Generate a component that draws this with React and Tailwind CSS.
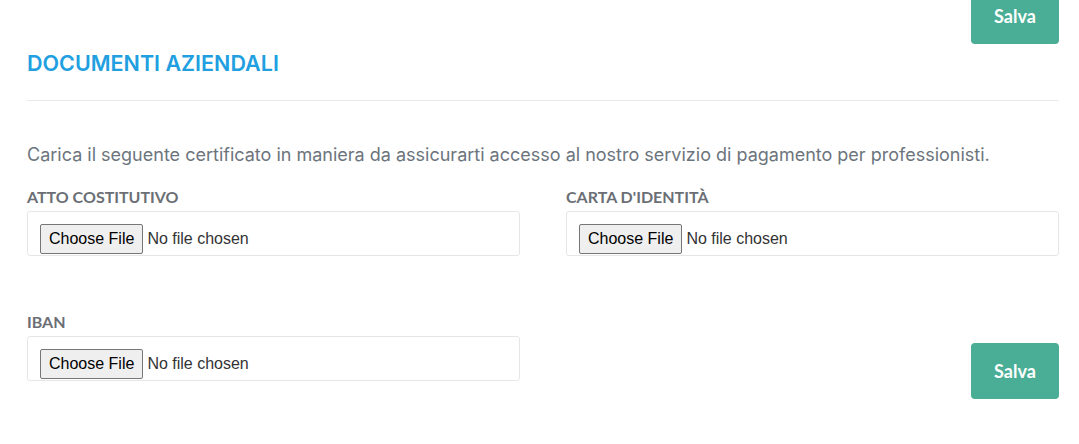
import React from "react";

/* ================= FILE FIELD ================= */
function FileField({ label }) {
  return (
    <div>
      <label className="block font-['Lato'] font-bold text-[16px] leading-[20px] text-[#6b6f75] uppercase mb-[4px]">
        {label}
      </label>
      <div className="h-[45px] border border-[#e6e6e6] rounded-[3px] px-[12px] pt-[12px]">
        <input
          type="file"
          className="block text-[16px] font-['Liberation_Sans',Arial,sans-serif] text-[#333] file:mr-[4px] file:px-[8px] file:py-[2px] file:border file:border-solid file:border-[#767676] file:rounded-[2px] file:bg-[#efefef] file:text-black file:text-[16px] file:font-['Liberation_Sans',Arial,sans-serif]"
        />
      </div>
    </div>
  );
}

function SaveButton({ className = "" }) {
  return (
    <button
      className={`w-[88px] h-[56px] rounded-[4px] bg-[#4aae96] text-white font-['Lato'] font-bold text-[18px] ${className}`}
    >
      Salva
    </button>
  );
}

export default function App() {
  return (
    <div className="w-[1079px] h-[444px] bg-white overflow-hidden font-['Inter',sans-serif]">
      <div className="pl-[27px] pr-[20px]">

        {/* HEADER */}
        <div className="flex justify-end -mt-[12px]">
          <SaveButton />
        </div>

        <h2 className="mt-[7px] text-[21.5px] leading-[25px] font-semibold text-[#219fe0]">
          DOCUMENTI AZIENDALI
        </h2>

        <div className="mt-[24px] border-t border-[#e9e9e9]" />

        <p className="mt-[42px] text-[18px] leading-[24px] text-[#6c757d]">
          Carica il seguente certificato in maniera da assicurarti accesso al nostro servizio di pagamento per professionisti.
        </p>

        {/* FILES */}
        <div className="mt-[20px] grid grid-cols-2 gap-x-[46px] gap-y-[56px]">
          <FileField label="Atto costitutivo" />
          <FileField label="Carta d'identità" />
          <FileField label="Iban" />
          <div className="flex justify-end items-end">
            <SaveButton className="-mb-[18px]" />
          </div>
        </div>
      </div>
    </div>
  );
}
